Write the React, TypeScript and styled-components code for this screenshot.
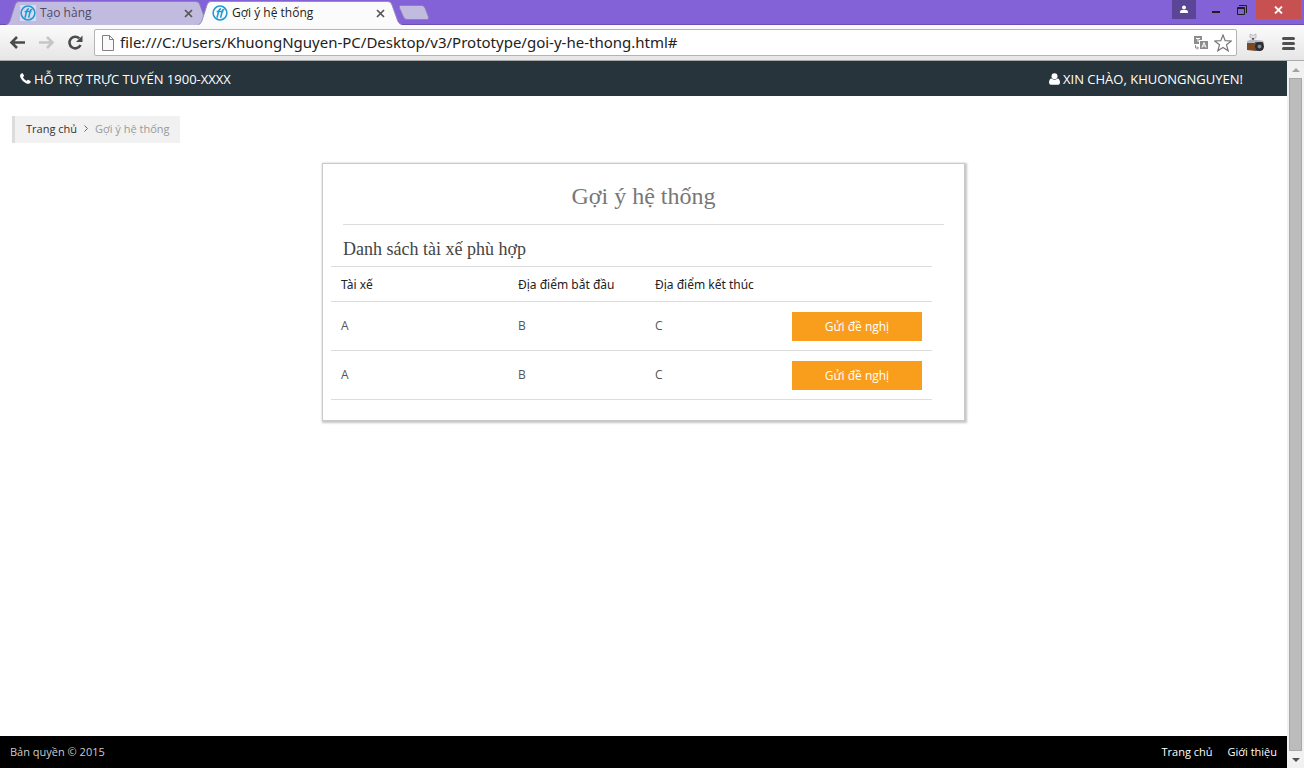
import React from "react";
import styled, { createGlobalStyle } from "styled-components";

const uiFont = `"Open Sans", "Noto Sans", "Liberation Sans", sans-serif`;
const wideFont = `"Noto Sans", "Open Sans", "Liberation Sans", sans-serif`;
const serifFont = `"Liberation Serif", "DejaVu Serif", serif`;

const GlobalStyle = createGlobalStyle`
  *, *::before, *::after { box-sizing: border-box; }
  body { margin: 0; font-family: ${uiFont}; font-size: 12px; color: #333; background: #fff; }
  button, input { font-family: inherit; }
  a { color: inherit; text-decoration: none; }
`;

const Window = styled.div`
  display: flex;
  flex-direction: column;
  min-height: 100vh;
`;

const TabStrip = styled.div`
  display: flex;
  align-items: flex-end;
  height: 25px;
  padding-left: 6px;
  background: #8262d6;
  border-bottom: 1px solid #6a4fb4;
`;

const TabItem = styled.div<{ $active?: boolean }>`
  position: relative;
  z-index: ${(p) => (p.$active ? 2 : 1)};
  display: flex;
  align-items: center;
  gap: 4px;
  width: 204px;
  height: 24px;
  margin: 0 -12px -1px 0;
  padding: 0 17px 0 14px;
  color: ${(p) => (p.$active ? "#222" : "#4f4a66")};
`;

const TabShape = styled.svg`
  position: absolute;
  inset: 0;
  z-index: -1;
`;

const TabTitle = styled.span`
  flex: 1;
  line-height: 16px;
  white-space: nowrap;
`;

const IconButton = styled.button`
  display: flex;
  align-items: center;
  justify-content: center;
  padding: 0;
  border: 0;
  background: none;
  color: inherit;
`;

const NewTab = styled(IconButton)`
  margin: 0 0 4px 8px;
`;

const WindowControls = styled.div`
  display: flex;
  align-self: flex-start;
  margin: 0 3px 0 auto;
`;

const ControlButton = styled(IconButton)<{ $width: number; $color?: string }>`
  width: ${(p) => p.$width}px;
  height: 19px;
  background: ${(p) => p.$color ?? "transparent"};
`;

const UserButton = styled(ControlButton)`
  margin-right: 7px;
`;

const Toolbar = styled.div`
  display: flex;
  align-items: center;
  height: 36px;
  padding: 0 9px;
  background: linear-gradient(#fbfbfb, #e6e6e6);
  border-bottom: 1px solid #a9a9a9;
`;

const NavButtons = styled.div`
  display: flex;
  gap: 11px;
  margin-right: 9px;
`;

const AddressBar = styled.div`
  display: flex;
  flex: 1;
  align-items: center;
  gap: 6px;
  height: 27px;
  padding: 0 4px 0 7px;
  background: #fff;
  border: 1px solid #b4b4b4;
  border-radius: 2px;
`;

const AddressInput = styled.input`
  flex: 1;
  min-width: 0;
  padding: 0 0 2px;
  border: 0;
  outline: 0;
  background: none;
  color: #222;
  font-family: ${wideFont};
  font-size: 15px;
  line-height: 20px;
`;

const Extensions = styled.div`
  display: flex;
  align-items: center;
  gap: 16px;
  margin-left: 9px;
`;

const Viewport = styled.div`
  display: flex;
  flex: 1;
`;

const Page = styled.div`
  display: flex;
  flex: 1;
  flex-direction: column;
  min-width: 0;
`;

const Header = styled.header`
  display: flex;
  align-items: center;
  justify-content: space-between;
  height: 35px;
  padding: 0 44px 0 20px;
  background: #27343c;
  color: #fff;
  font-size: 13px;
  line-height: 20px;
`;

const HeaderItem = styled.div`
  display: flex;
  align-items: center;
  gap: 3px;
`;

const Main = styled.main`
  flex: 1;
  padding: 20px 12px;
`;

const Breadcrumb = styled.nav`
  display: flex;
  align-items: center;
  gap: 7px;
  width: fit-content;
  height: 27px;
  padding: 0 10px 2px 11px;
  background: #f1f1f1;
  border-left: 3px solid #dcdcdc;
  color: #999;
  font-size: 11px;
`;

const CrumbLink = styled.a`
  color: #333;
`;

const Card = styled.section`
  max-width: 643px;
  margin: 20px auto 0;
  padding: 13px 0 20px;
  background: #fff;
  border: 1px solid #c9c9c9;
  box-shadow: 1px 1px 2px 1px #c6c6c6;
`;

const CardTitle = styled.h1`
  margin: 0 20px;
  padding: 1px 0 10px;
  border-bottom: 1px solid #ddd;
  color: #777;
  font: 24px/36px ${serifFont};
  text-align: center;
`;

const ListTitle = styled.h2`
  margin: 13px 20px 6px;
  color: #444;
  font: 18px/22px ${serifFont};
`;

const TableWrap = styled.div`
  padding: 0 32px 0 8px;
`;

const DriverTable = styled.table`
  width: 100%;
  border-collapse: collapse;
  border-top: 1px solid #ddd;
  table-layout: fixed;
`;

const Column = styled.col<{ $width?: number }>`
  width: ${(p) => (p.$width ? `${p.$width}px` : "auto")};
`;

const Row = styled.tr`
  border-bottom: 1px solid #ddd;
`;

const HeadCell = styled.th`
  height: 35px;
  padding: 0 10px;
  color: #222;
  font-family: ${wideFont};
  font-weight: 400;
  text-align: left;
`;

const Cell = styled.td`
  height: 49px;
  padding: 0 10px 2px;
  color: #555;
`;

const ActionCell = styled(Cell)`
  padding: 0 10px;
`;

const SendButton = styled.button`
  display: block;
  width: 100%;
  height: 29px;
  padding: 0;
  border: 0;
  background: #f99d1c;
  color: #fff;
  font-size: 12px;
`;

const Footer = styled.footer`
  display: flex;
  align-items: center;
  justify-content: space-between;
  height: 32px;
  padding: 0 10px 2px;
  background: #000;
  color: #ccc;
  font-size: 11px;
`;

const FooterLinks = styled.nav`
  display: flex;
  gap: 15px;
  color: #fff;
`;

const ScrollBar = styled.div`
  display: flex;
  flex-direction: column;
  align-items: center;
  width: 17px;
  background: #f1f1f1;
`;

const ScrollArrow = styled(IconButton)`
  width: 100%;
  height: 17px;
`;

const ScrollThumb = styled.div`
  flex: 1;
  width: 13px;
  background: #bcbcbc;
  border: 1px solid #a8a8a8;
`;

const Favicon = ({ backdrop }: { backdrop: string }) => (
  <svg width="16" height="16" viewBox="0 0 16 16" aria-hidden="true">
    <path d="M0 0H16V16H0Z" fill={backdrop} />
    <circle cx="8" cy="8" r="6.900" fill="none" stroke="#1b9ad6" strokeWidth="1.500" />
    <path d="M5 12.800 6.700 6Q7.200 4 9 3.800M8.600 12.800 10.200 6.500Q10.700 4.200 12.400 4.600M4.600 6.600h6.800" fill="none" stroke="#1b9ad6" strokeWidth="1.500" />
  </svg>
);

const CloseIcon = () => (
  <svg width="9" height="9" viewBox="0 0 9 9" aria-hidden="true">
    <path d="M1 1l7 7M8 1l-7 7" stroke="#555" strokeWidth="1.700" />
  </svg>
);

function Tab({ title, active }: { title: string; active?: boolean }) {
  return (
    <TabItem $active={active}>
      <TabShape width="204" height="24" viewBox="0 0 204 24" aria-hidden="true">
        <path
          d="M0 24C3 23 3.500 21 4.500 18L9 4Q10 .5 13 .5H190Q193 .5 194 4L199 18C200 21 201 23 204 24Z"
          fill={active ? "#fbfbfb" : "#c1bcdf"}
        />
        <path
          d="M0 23.500C3 23 3.500 21 4.500 18L9 4Q10 .5 13 .5H190Q193 .5 194 4L199 18C200 21 201 23 204 23.500"
          fill="none"
          stroke={active ? "#9a8cc4" : "#8d7fbb"}
        />
      </TabShape>
      <Favicon backdrop={active ? "#fbfbfb" : "#dcd9ee"} />
      <TabTitle>{title}</TabTitle>
      <IconButton aria-label="Close tab">
        <CloseIcon />
      </IconButton>
    </TabItem>
  );
}

const drivers = [
  { name: "A", from: "B", to: "C" },
  { name: "A", from: "B", to: "C" },
];

export default function App() {
  return (
    <>
      <GlobalStyle />
      <Window>
        <TabStrip>
          <Tab title="Tạo hàng" />
          <Tab title="Gợi ý hệ thống" active />
          <NewTab aria-label="New tab">
            <svg width="32" height="15" viewBox="0 0 32 15">
              <path d="M3 .5H24Q26 .5 27 3L30.500 12Q31 14.500 29 14.500H9Q6.500 14.500 5.500 12L1.500 3Q.5 .5 3 .5Z" fill="#c1bcdf" stroke="#8d7fbb" />
            </svg>
          </NewTab>
          <WindowControls>
            <UserButton $width={24} $color="#5b4596" aria-label="User">
              <svg width="8" height="10" viewBox="0 0 8 10" fill="#fff">
                <circle cx="4" cy="2.500" r="2" />
                <path d="M0 8V7Q0 5 2 5H6Q8 5 8 7V8Z" />
              </svg>
            </UserButton>
            <ControlButton $width={26} aria-label="Minimize">
              <svg width="8" height="9" viewBox="0 0 8 9">
                <path d="M0 7H8" stroke="#1e1e1e" strokeWidth="2" />
              </svg>
            </ControlButton>
            <ControlButton $width={27} aria-label="Restore">
              <svg width="11" height="11" viewBox="0 0 11 11" fill="none" stroke="#1e1e1e">
                <path d="M.5 3.500H7.500V10.500H.5ZM.5 4.500H7.500M2 1.500H9.500V9" />
              </svg>
            </ControlButton>
            <ControlButton $width={45} $color="#c75050" aria-label="Close">
              <svg width="9" height="8" viewBox="0 0 9 8">
                <path d="M1 .5l7 7M8 .5l-7 7" stroke="#fff" strokeWidth="1.800" />
              </svg>
            </ControlButton>
          </WindowControls>
        </TabStrip>

        <Toolbar>
          <NavButtons>
            <IconButton aria-label="Back">
              <svg width="18" height="16" viewBox="0 0 18 16" fill="none" stroke="#4b4b4b" strokeWidth="2.600">
                <path d="M16 7.500H3M8 2 2.500 7.500 8 13" />
              </svg>
            </IconButton>
            <IconButton aria-label="Forward">
              <svg width="18" height="16" viewBox="0 0 18 16" fill="none" stroke="#c6c6c6" strokeWidth="2.600">
                <path d="M1 7.500H14M9 2l5.500 5.500L9 13" />
              </svg>
            </IconButton>
            <IconButton aria-label="Reload">
              <svg width="18" height="16" viewBox="0 0 18 16">
                <path d="M13.500 10A5.800 5.800 0 1 1 12.300 3.400" fill="none" stroke="#4b4b4b" strokeWidth="2.600" />
                <path d="M15.500 .5V7H9Z" fill="#4b4b4b" />
              </svg>
            </IconButton>
          </NavButtons>
          <AddressBar>
            <svg width="12" height="16" viewBox="0 0 12 16" fill="#fafafa" stroke="#808080" aria-hidden="true">
              <path d="M.5 .5H7.500L11.500 4.500V15.500H.5ZM7.500 .5V4.500H11.500" />
            </svg>
            <AddressInput
              aria-label="Address"
              defaultValue="file:///C:/Users/KhuongNguyen-PC/Desktop/v3/Prototype/goi-y-he-thong.html#"
            />
            <IconButton aria-label="Translate">
              <svg width="14" height="14" viewBox="0 0 14 14">
                <path d="M0 0H8V4H5V8H0Z" fill="#8c8c8c" />
                <path d="M2 2.500H6M4 2.500V6" stroke="#fff" />
                <path d="M6 5H14V13H6Z" fill="#8c8c8c" />
                <path d="M8 11.500 10 6.500l2 5M8.800 10H11.200" stroke="#fff" fill="none" />
                <path d="M1.500 9V12H4M3 10.500 4.500 12 3 13.500" stroke="#8c8c8c" fill="none" />
              </svg>
            </IconButton>
            <IconButton aria-label="Bookmark">
              <svg width="18" height="18" viewBox="0 0 18 18" fill="#fff" stroke="#777" strokeWidth="1.200">
                <path d="M9 1 11.200 6.700 17.300 7 12.500 10.800 14.200 16.800 9 13.400 3.800 16.800 5.500 10.800.7 7 6.800 6.700Z" />
              </svg>
            </IconButton>
          </AddressBar>
          <Extensions>
            <IconButton aria-label="Capture">
              <svg width="20" height="20" viewBox="0 0 20 20">
                <path d="M4 1 7 2.500 10 1V5L7.500 5.500 4 4.500Z" fill="#e4e4e8" stroke="#9a9aa2" strokeWidth=".6" />
                <path d="M7 5V8" stroke="#555" strokeWidth="2" />
                <path d="M1 8 5 6.500 16 7.500 18 9V12L1 11Z" fill="#b9bbc4" />
                <path d="M1 10H10V18L1 17Z" fill="#7b4a22" />
                <path d="M9 9H17V17L10 18Z" fill="#55565e" />
                <circle cx="13.500" cy="13.500" r="4.500" fill="#2a2b30" />
                <circle cx="13.500" cy="13.500" r="2" fill="#85878f" />
              </svg>
            </IconButton>
            <IconButton aria-label="Menu">
              <svg width="13" height="14" viewBox="0 0 13 14" stroke="#505050" strokeWidth="3" strokeLinecap="round">
                <path d="M1.500 2.500H11.500M1.500 7.500H11.500M1.500 12.500H11.500" />
              </svg>
            </IconButton>
          </Extensions>
        </Toolbar>

        <Viewport>
          <Page>
            <Header>
              <HeaderItem>
                <svg width="11" height="11" viewBox="0 0 11 11" fill="#fff" aria-hidden="true">
                  <path d="M.4 1.400Q1.400.1 2.600.2 3 .3 4 2.600 4.200 3.200 3.100 4.100 3 4.400 3.200 4.800 4.400 6.900 6.300 7.800 6.700 7.900 7 7.500 7.700 6.700 8.100 6.800 10.600 8 10.800 8.400 10.900 9.800 9.400 10.600 8 11.200 6 10.200 2.200 8.400.7 5Q-.4 2.800.4 1.400Z" />
                </svg>
                HỖ TRỢ TRỰC TUYẾN 1900-XXXX
              </HeaderItem>
              <HeaderItem>
                <svg width="11" height="12" viewBox="0 0 11 12" fill="#fff" aria-hidden="true">
                  <circle cx="5.500" cy="3.200" r="3" />
                  <path d="M2.600 5.400Q0 5.600 0 9.500 0 11.800 2 11.800H9Q11 11.800 11 9.500 11 5.600 8.400 5.400 5.500 8 2.600 5.400Z" />
                </svg>
                XIN CHÀO, KHUONGNGUYEN!
              </HeaderItem>
            </Header>

            <Main>
              <Breadcrumb aria-label="Breadcrumb">
                <CrumbLink href="#">Trang chủ</CrumbLink>
                <svg width="4" height="7" viewBox="0 0 4 7" fill="none" stroke="#666" aria-hidden="true">
                  <path d="M.5 .5 3.500 3.500 .5 6.500" />
                </svg>
                <span>Gợi ý hệ thống</span>
              </Breadcrumb>

              <Card>
                <CardTitle>Gợi ý hệ thống</CardTitle>
                <ListTitle id="driver-list">Danh sách tài xế phù hợp</ListTitle>
                <TableWrap>
                  <DriverTable aria-labelledby="driver-list">
                    <colgroup>
                      <Column />
                      <Column $width={137} />
                      <Column $width={137} />
                      <Column $width={150} />
                    </colgroup>
                    <thead>
                      <Row>
                        <HeadCell>Tài xế</HeadCell>
                        <HeadCell>Địa điểm bắt đầu</HeadCell>
                        <HeadCell>Địa điểm kết thúc</HeadCell>
                        <HeadCell />
                      </Row>
                    </thead>
                    <tbody>
                      {drivers.map((driver, index) => (
                        <Row key={index}>
                          <Cell>{driver.name}</Cell>
                          <Cell>{driver.from}</Cell>
                          <Cell>{driver.to}</Cell>
                          <ActionCell>
                            <SendButton type="button">Gửi đề nghị</SendButton>
                          </ActionCell>
                        </Row>
                      ))}
                    </tbody>
                  </DriverTable>
                </TableWrap>
              </Card>
            </Main>

            <Footer>
              <span>Bản quyền © 2015</span>
              <FooterLinks>
                <a href="#">Trang chủ</a>
                <a href="#">Giới thiệu</a>
              </FooterLinks>
            </Footer>
          </Page>

          <ScrollBar>
            <ScrollArrow aria-label="Scroll up">
              <svg width="8" height="4" viewBox="0 0 8 4" fill="#a3a3a3">
                <path d="M0 4 4 0l4 4Z" />
              </svg>
            </ScrollArrow>
            <ScrollThumb />
            <ScrollArrow aria-label="Scroll down">
              <svg width="8" height="4" viewBox="0 0 8 4" fill="#505050">
                <path d="M0 0 4 4l4-4Z" />
              </svg>
            </ScrollArrow>
          </ScrollBar>
        </Viewport>
      </Window>
    </>
  );
}
